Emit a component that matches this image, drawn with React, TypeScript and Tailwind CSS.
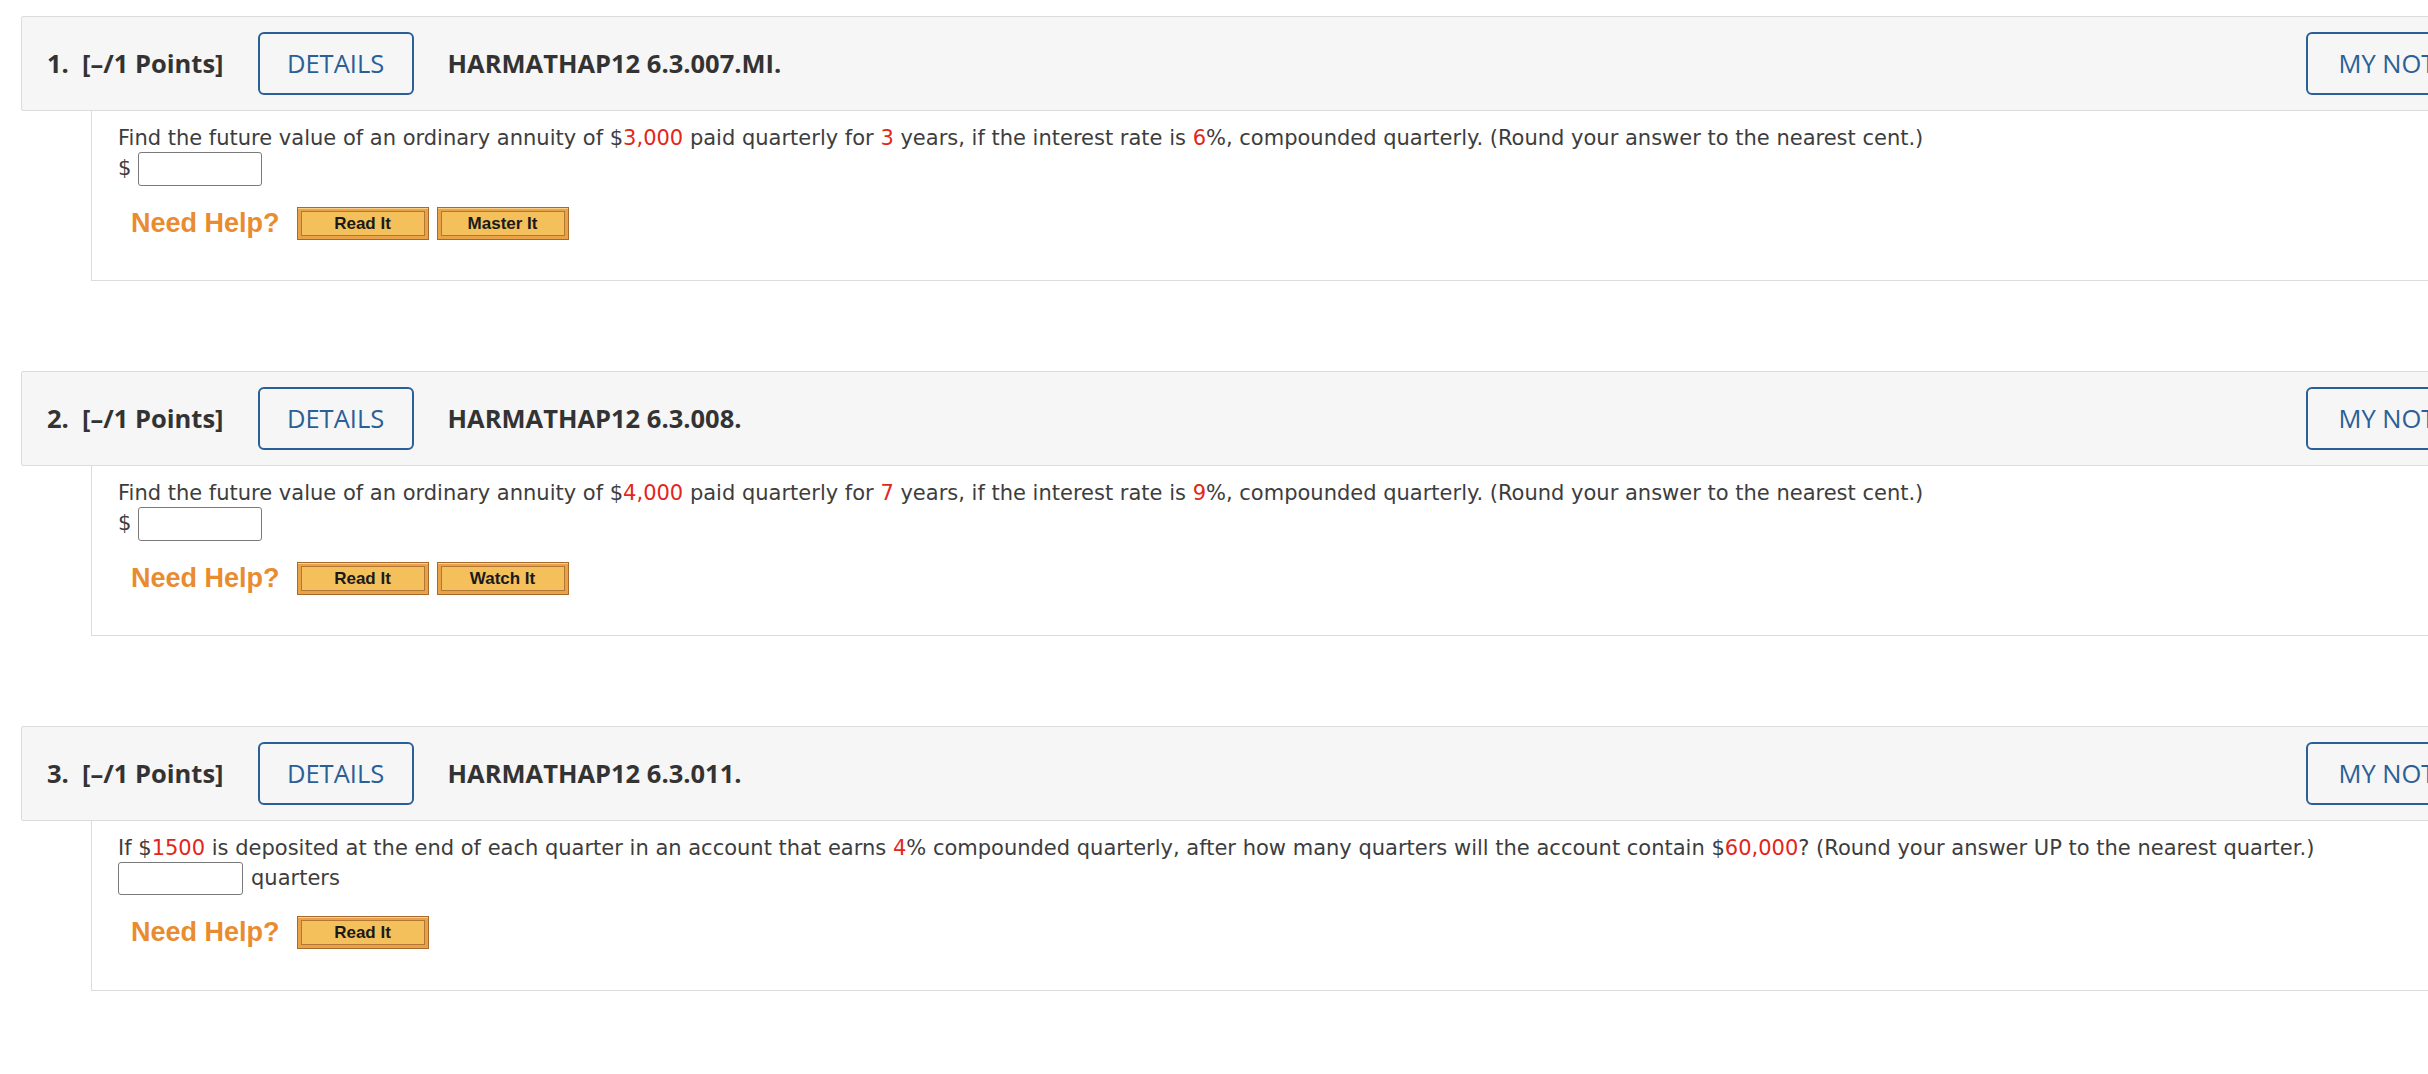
import React from "react";

const HEAD_FONT = { fontFamily: '"Open Sans", "Liberation Sans", sans-serif' };
const BODY_FONT = { fontFamily: '"DejaVu Sans", Verdana, sans-serif' };
const HELP_FONT = { fontFamily: '"Liberation Sans", Arial, sans-serif' };

type Question = {
  num: number;
  code: string;
  prompt: React.ReactNode;
  answer: "dollar" | "quarters";
  help: string[];
};

const Red = ({ children }: { children: React.ReactNode }) => (
  <span className="text-[#e3261c]">{children}</span>
);

const questions: Question[] = [
  {
    num: 1,
    code: "HARMATHAP12 6.3.007.MI.",
    prompt: (
      <>
        Find the future value of an ordinary annuity of $<Red>3,000</Red> paid quarterly for <Red>3</Red> years, if the
        interest rate is <Red>6</Red>%, compounded quarterly. (Round your answer to the nearest cent.)
      </>
    ),
    answer: "dollar",
    help: ["Read It", "Master It"],
  },
  {
    num: 2,
    code: "HARMATHAP12 6.3.008.",
    prompt: (
      <>
        Find the future value of an ordinary annuity of $<Red>4,000</Red> paid quarterly for <Red>7</Red> years, if the
        interest rate is <Red>9</Red>%, compounded quarterly. (Round your answer to the nearest cent.)
      </>
    ),
    answer: "dollar",
    help: ["Read It", "Watch It"],
  },
  {
    num: 3,
    code: "HARMATHAP12 6.3.011.",
    prompt: (
      <>
        If $<Red>1500</Red> is deposited at the end of each quarter in an account that earns <Red>4</Red>% compounded
        quarterly, after how many quarters will the account contain $<Red>60,000</Red>? (Round your answer UP to the
        nearest quarter.)
      </>
    ),
    answer: "quarters",
    help: ["Read It"],
  },
];

function HelpButton({ label }: { label: string }) {
  return (
    <button className="h-[33px] w-[132px] border border-[#a86a2c] bg-[#e9a247] p-[3px] shadow-[inset_0_1px_0_#f8d08a]">
      <div
        className="flex h-full w-full items-center justify-center border border-[#b47634] bg-[#f3c05c] text-[17px] font-bold leading-none text-[#1a1a1a]"
        style={HELP_FONT}
      >
        {label}
      </div>
    </button>
  );
}

function OutlineButton({ children, className = "" }: { children: React.ReactNode; className?: string }) {
  return (
    <button
      className={`flex h-[63px] items-center justify-center rounded-[6px] border-[2.5px] border-[#2b5f97] bg-transparent text-[25.5px] font-medium text-[#2b5f97] ${className}`}
      style={HEAD_FONT}
    >
      {children}
    </button>
  );
}

function QuestionBlock({ q }: { q: Question }) {
  return (
    <div className="mb-[90px] w-[2520px]">
      {/* Header bar */}
      <div className="flex h-[95px] items-center rounded-[2px] border border-[#dcdcdc] bg-[#f6f6f6] pl-[25px]">
        <span className="whitespace-pre text-[25.5px] font-bold text-[#333333]" style={HEAD_FONT}>
          {`${q.num}.  [–/1 Points]`}
        </span>
        <OutlineButton className="ml-[34px] w-[156px]">DETAILS</OutlineButton>
        <span className="ml-[34px] text-[25.5px] font-bold text-[#333333]" style={HEAD_FONT}>
          {q.code}
        </span>
        <OutlineButton className="ml-auto mr-[44px] w-[190px]">MY NOTES</OutlineButton>
      </div>

      {/* Question body */}
      <div className="ml-[70px] h-[170px] border-b border-l border-[#dcdcdc] pl-[26px] pt-[14px]" style={BODY_FONT}>
        <p className="text-[21px] leading-[26px] text-[#3d3d3d]">{q.prompt}</p>

        <div className="mt-[1px] flex items-center text-[21px] text-[#3d3d3d]">
          {q.answer === "dollar" ? (
            <>
              <span>$</span>
              <input className="ml-[7px] h-[34px] w-[124px] rounded-[3px] border border-[#7a7a7a] bg-white" />
            </>
          ) : (
            <>
              <input className="h-[33px] w-[125px] rounded-[3px] border border-[#7a7a7a] bg-white" />
              <span className="ml-[8px]">quarters</span>
            </>
          )}
        </div>

        <div className="mt-[21px] flex items-center pl-[13px]">
          <span className="mr-[17px] text-[27px] font-bold leading-none text-[#e98b2f]" style={HELP_FONT}>
            Need Help?
          </span>
          <div className="flex gap-[8px]">
            {q.help.map((h) => (
              <HelpButton key={h} label={h} />
            ))}
          </div>
        </div>
      </div>
    </div>
  );
}

export default function App() {
  return (
    <div className="h-screen w-full overflow-hidden bg-white pl-[21px] pt-[16px]">
      {questions.map((q) => (
        <QuestionBlock key={q.num} q={q} />
      ))}
    </div>
  );
}
